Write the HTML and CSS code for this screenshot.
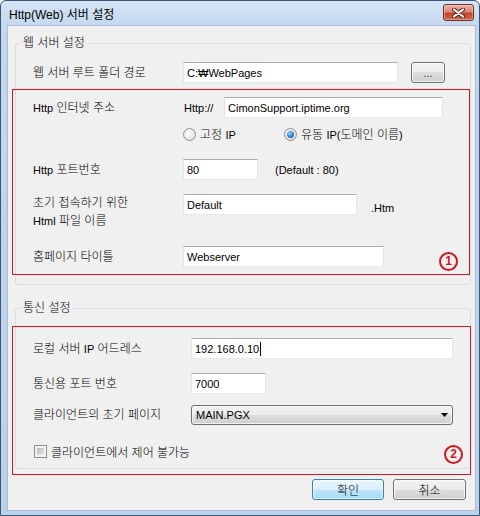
FILE: index.html
```html
<!DOCTYPE html>
<html lang="ko">
<head>
<meta charset="utf-8">
<title>Http(Web) 서버 설정</title>
<link rel="stylesheet" href="styles.css">
</head>
<body>
<div class="window">
  <div class="titlebar">
    <span class="title">Http(Web) 서버 설정</span>
    <span class="close">
      <svg width="13" height="10" viewBox="0 0 13 10"><path d="M2 1.5 L11 8.5 M11 1.5 L2 8.5" stroke="#5a1f16" stroke-width="4" stroke-linecap="round" fill="none"/><path d="M2 1.5 L11 8.5 M11 1.5 L2 8.5" stroke="#fff" stroke-width="2.2" stroke-linecap="round" fill="none"/></svg>
    </span>
  </div>
  <div class="client">
    <fieldset class="group g1">
      <legend>웹 서버 설정</legend>
      <div class="rows">
        <div class="row ra">
          <span class="lbl">웹 서버 루트 폴더 경로</span>
          <span class="tb w-root l">C:₩WebPages</span>
          <span class="btn browse l">...</span>
        </div>
        <div class="row rb">
          <span class="lbl"><span class="l">Http</span> 인터넷 주소</span>
          <span class="prefix l">Http://</span>
          <span class="tb w-url l">CimonSupport.iptime.org</span>
        </div>
        <div class="row rc">
          <span class="radio-item ri1"><span class="radio"></span>고정 <span class="ip">IP</span></span>
          <span class="radio-item"><span class="radio on"></span>유동 <span class="ip">IP(</span>도메인 이름<span class="ip">)</span></span>
        </div>
        <div class="row rd">
          <span class="lbl"><span class="l">Http</span> 포트번호</span>
          <span class="tb w-port l">80</span>
          <span class="hint l">(Default : 80)</span>
        </div>
        <div class="row re">
          <span class="lbl two">초기 접속하기 위한<br><span class="l">Html</span> 파일 이름</span>
          <span class="tb w-html l">Default</span>
          <span class="ext l">.Htm</span>
        </div>
        <div class="row rf">
          <span class="lbl">홈페이지 타이틀</span>
          <span class="tb w-title l">Webserver</span>
        </div>
      </div>
    </fieldset>

    <fieldset class="group g2">
      <legend>통신 설정</legend>
      <div class="rows">
        <div class="row s1">
          <span class="lbl">로컬 서버 <span class="ip">IP</span> 어드레스</span>
          <span class="tb w-wide l">192.168.0.10<span class="caret"></span></span>
        </div>
        <div class="row s2">
          <span class="lbl">통신용 포트 번호</span>
          <span class="tb w-port l">7000</span>
        </div>
        <div class="row s3">
          <span class="lbl">클라이언트의 초기 페이지</span>
          <span class="btn combo l">MAIN.PGX<svg class="arrow" width="7" height="4" viewBox="0 0 7 4"><path d="M0 0H7L3.5 4Z" fill="#000"/></svg></span>
        </div>
        <div class="row s4">
          <span class="check"></span>
          <span>클라이언트에서 제어 불가능</span>
        </div>
      </div>
    </fieldset>

    <div class="actions">
      <span class="btn default ok">확인</span>
      <span class="btn cancel">취소</span>
    </div>

    <div class="note n1"><span class="mark m1">1</span></div>
    <div class="note n2"><span class="mark m2">2</span></div>
  </div>
</div>
</body>
</html>
```
FILE: styles.css
```css
* { box-sizing: border-box; }
html, body { margin: 0; padding: 0; }
body {
  width: 480px;
  height: 516px;
  overflow: hidden;
  background: #ffffff;
  font-family: "Liberation Sans", "Noto Sans CJK KR", sans-serif;
  font-size: 12px;
  font-weight: 300;
  color: #000;
}

.window {
  width: 480px;
  height: 516px;
  border: 1px solid #3b5674;
  border-radius: 6px 6px 0 0;
  background: linear-gradient(#d6e4f4 0, #c4d8ef 25px, #bbd1ea 100%);
  padding: 0 4px 5px 7px;
  display: flex;
  flex-direction: column;
}

.titlebar {
  height: 25px;
  flex: none;
  display: flex;
  align-items: flex-start;
  justify-content: space-between;
}
.title {
  margin-top: 6px;
  line-height: 16px;
  padding-left: 1px;
  font-weight: 400;
}
.close {
  margin-top: 3px;
  margin-right: 1px;
  width: 31px;
  height: 17px;
  border: 1px solid #6b2b22;
  border-radius: 3px;
  background: linear-gradient(#eab0a2 0, #dc8a76 45%, #c4432c 55%, #d06a4c 100%);
  box-shadow: inset 0 0 0 1px rgba(255, 255, 255, 0.35);
  display: flex;
  align-items: center;
  justify-content: center;
}

.client {
  flex: 1;
  position: relative;
  background: #f0f0f0;
  box-shadow: 0 0 0 1px #a9bdd4;
  display: flex;
  flex-direction: column;
}

.group {
  margin: 0 4px 0 7px;
  padding: 0;
  min-width: 0;
  border: 1px solid #d5dfe5;
  border-radius: 3px;
}
.g1 { margin-top: 10px; }
.g2 { margin-top: 16px; }
legend {
  margin-left: 5px;
  padding: 0 2px;
  line-height: 14px;
  height: 14px;
}

.rows {
  display: flex;
  flex-direction: column;
  padding-left: 17px;
}
.g1 .rows { padding-bottom: 17px; }
.g2 .rows { padding-bottom: 10px; }

.row {
  display: flex;
  align-items: center;
  height: 21px;
}
.ra { margin-top: 12px; }
.rb { margin-top: 14px; }
.rc { margin-top: 10px; height: 13px; padding-left: 150px; }
.rd { margin-top: 18px; }
.re { margin-top: 14px; height: 36px; align-items: flex-start; }
.rf { margin-top: 16px; }
.s1 { margin-top: 23px; }
.s2 { margin-top: 14px; }
.s3 { margin-top: 11px; height: 20px; }
.s4 { margin-top: 20px; height: 13px; }

.lbl {
  width: 150px;
  flex: none;
  line-height: 14px;
  white-space: nowrap;
}
.g2 .lbl { width: 158px; }
.lbl.two { line-height: 18px; }

.l { font-size: 11px; font-weight: 400; }
.ip { font-size: 11px; font-weight: 400; }

.tb {
  height: 21px;
  flex: none;
  background: #fff;
  border: 1px solid;
  border-color: #abadb3 #e2e3ea #e3e9ef #e2e3ea;
  padding: 0 3px;
  display: flex;
  align-items: center;
  white-space: nowrap;
  overflow: hidden;
}
.w-root { width: 215px; }
.w-url { width: 219px; }
.w-port { width: 75px; }
.w-html { width: 174px; }
.w-title { width: 201px; }
.w-wide { width: 262px; }

.prefix { width: 41px; flex: none; padding-left: 1px; }
.hint { margin-left: 17px; }
.ext { margin-left: 14px; margin-top: 7px; line-height: 14px; }

.caret {
  display: inline-block;
  width: 1px;
  height: 14px;
  background: #000;
  margin-left: 1px;
}

.btn {
  height: 21px;
  flex: none;
  border: 1px solid #707070;
  border-radius: 3px;
  background: linear-gradient(#f2f2f2 0, #ebebeb 50%, #dddddd 50%, #cfcfcf 100%);
  box-shadow: inset 0 0 0 1px rgba(255, 255, 255, 0.7);
  display: flex;
  align-items: center;
  justify-content: center;
}
.browse { width: 34px; margin-left: 13px; color: #333; }
.combo {
  width: 262px;
  height: 20px;
  justify-content: space-between;
  padding: 0 4px 0 4px;
}
.default {
  border-color: #3c7fb1;
  background: linear-gradient(#eaf6fd 0, #d9f0fc 50%, #bee6fd 50%, #a7d9f5 100%);
}

.radio-item {
  display: flex;
  align-items: center;
  line-height: 14px;
  white-space: pre;
}
.ri1 { width: 101px; }
.radio {
  width: 13px;
  height: 13px;
  flex: none;
  margin-right: 4px;
  border-radius: 50%;
  border: 1px solid #8f8f8f;
  background: radial-gradient(circle at 40% 40%, #ffffff 0, #e8e8e8 55%, #cdcdcd 100%);
  display: flex;
  align-items: center;
  justify-content: center;
}
.radio.on::after {
  content: "";
  width: 7px;
  height: 7px;
  border-radius: 50%;
  background: radial-gradient(circle at 40% 35%, #9ad6fb 0, #2c80cc 55%, #0d3c7a 100%);
}

.check {
  width: 13px;
  height: 13px;
  flex: none;
  margin: 0 4px 0 1px;
  border: 1px solid #8f8f8f;
  background: #f4f4f4;
  padding: 2px;
}
.check::after {
  content: "";
  display: block;
  width: 7px;
  height: 7px;
  background: linear-gradient(135deg, #b3b8be, #ececec);
}

.actions {
  display: flex;
  justify-content: flex-end;
  gap: 9px;
  margin: 10px 9px 0 0;
}
.ok { width: 72px; }
.cancel { width: 73px; }

.note {
  position: absolute;
  z-index: 2;
  border: 1px solid #d8141c;
  pointer-events: none;
}
.n1 { left: 4px; top: 63px; width: 458px; height: 186px; }
.n2 { left: 4px; top: 300px; width: 459px; height: 149px; }

.mark {
  position: absolute;
  width: 19px;
  height: 19px;
  border: 2px solid #d2141c;
  border-radius: 50%;
  color: #d2141c;
  font: bold 12px/15px "Liberation Sans", sans-serif;
  text-align: center;
}
.m1 { left: 426px; top: 162px; }
.m2 { left: 431px; top: 118px; }
```
